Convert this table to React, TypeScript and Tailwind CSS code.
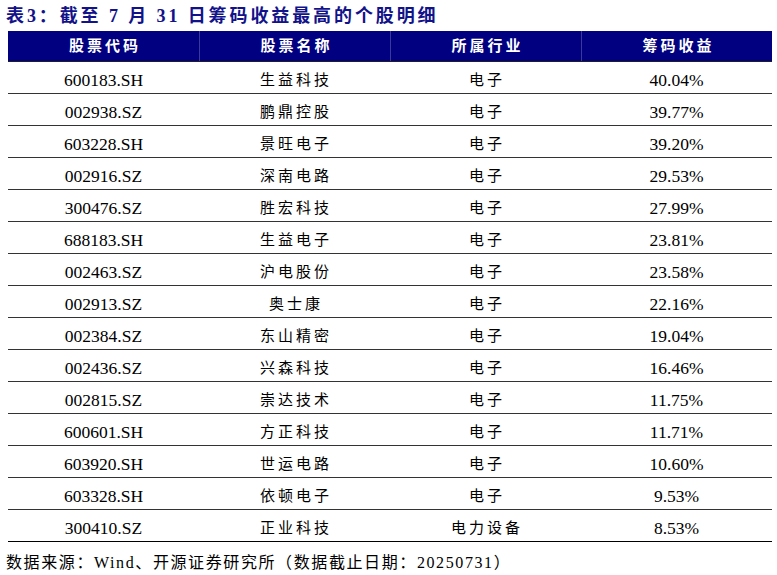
const rows: [string, string, string, string][] = [
  ["600183.SH", "生益科技", "电子", "40.04%"],
  ["002938.SZ", "鹏鼎控股", "电子", "39.77%"],
  ["603228.SH", "景旺电子", "电子", "39.20%"],
  ["002916.SZ", "深南电路", "电子", "29.53%"],
  ["300476.SZ", "胜宏科技", "电子", "27.99%"],
  ["688183.SH", "生益电子", "电子", "23.81%"],
  ["002463.SZ", "沪电股份", "电子", "23.58%"],
  ["002913.SZ", "奥士康", "电子", "22.16%"],
  ["002384.SZ", "东山精密", "电子", "19.04%"],
  ["002436.SZ", "兴森科技", "电子", "16.46%"],
  ["002815.SZ", "崇达技术", "电子", "11.75%"],
  ["600601.SH", "方正科技", "电子", "11.71%"],
  ["603920.SH", "世运电路", "电子", "10.60%"],
  ["603328.SH", "依顿电子", "电子", "9.53%"],
  ["300410.SZ", "正业科技", "电力设备", "8.53%"],
];

const headers = ["股票代码", "股票名称", "所属行业", "筹码收益"];

function Cjk({ children }: { children: string }) {
  return <span className="pl-[3px] text-[15px] tracking-[3px]">{children}</span>;
}

export default function App() {
  return (
    <div className="h-[575px] w-[777px] bg-white font-['Liberation_Serif','Noto_Sans_CJK_SC',serif] text-black">
      <h1 className="px-[6px] pt-[3px] text-[18px] font-bold leading-[26px] tracking-[2.9px] text-[#12128a]">
        表3：截至 7 月 31 日筹码收益最高的个股明细
      </h1>

      <div className="mx-[8px] mt-[2px] w-[764px]">
        <div className="grid h-[31px] grid-cols-4 border-b border-[#1f1f1f] bg-[#000080] text-white">
          {headers.map((h, i) => (
            <div
              key={h}
              className={`flex items-center justify-center font-bold ${i > 0 ? "border-l border-[#3a3a9a]" : ""}`}
            >
              <span className="pl-[3px] text-[15px] tracking-[3px]">{h}</span>
            </div>
          ))}
        </div>

        {rows.map((r, idx) => (
          <div
            key={r[0]}
            className={`grid h-[32px] grid-cols-4 border-b pt-[5px] ${idx === rows.length - 1 ? "border-black" : "border-[#333]"}`}
          >
            <div className="flex items-center justify-center text-[17.5px]">{r[0]}</div>
            <div className="flex items-center justify-center">
              <Cjk>{r[1]}</Cjk>
            </div>
            <div className="flex items-center justify-center">
              <Cjk>{r[2]}</Cjk>
            </div>
            <div className="flex items-center justify-center text-[17.5px]">{r[3]}</div>
          </div>
        ))}
      </div>

      <p className="px-[6px] pt-[10px] text-[16px] leading-[22px] tracking-[1.6px]">
        数据来源：Wind、开源证券研究所（数据截止日期：20250731）
      </p>
    </div>
  );
}
